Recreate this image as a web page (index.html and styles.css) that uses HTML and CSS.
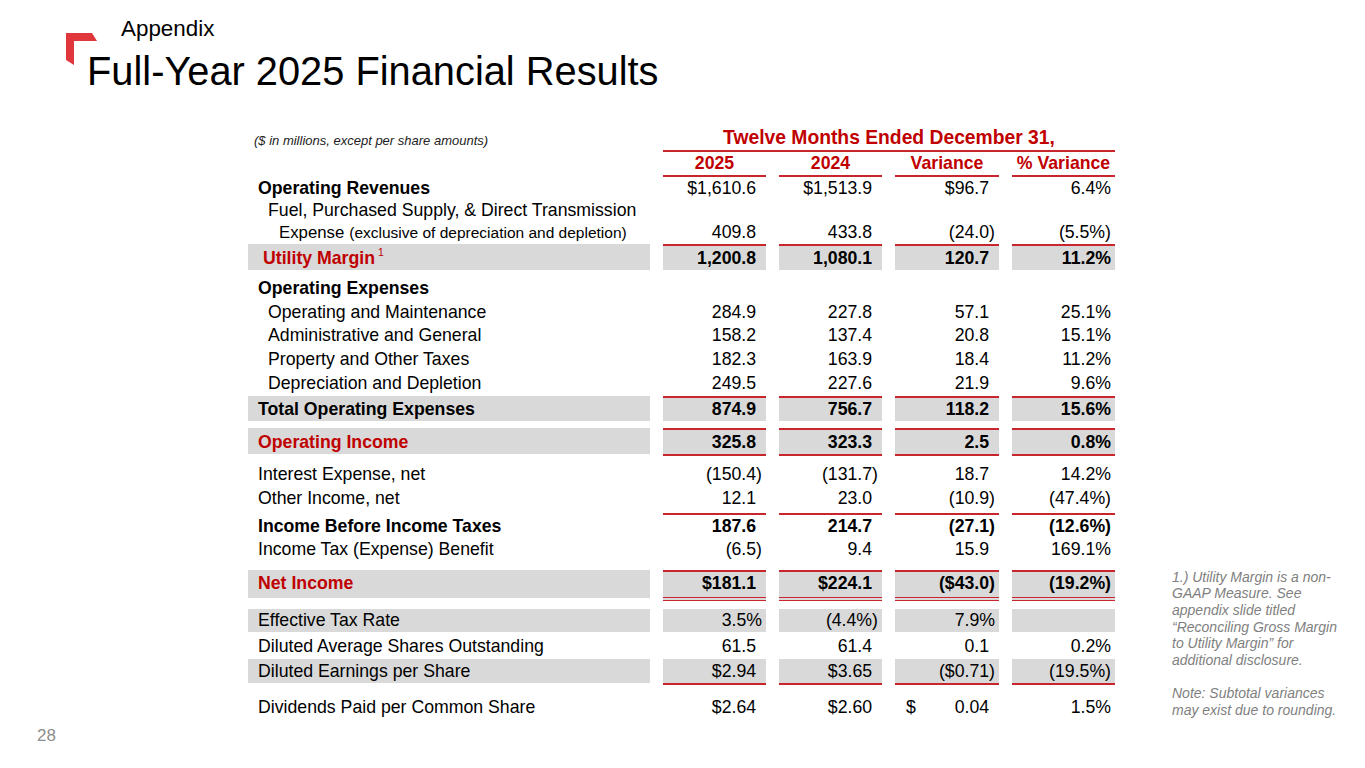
FILE: index.html
```html
<!DOCTYPE html>
<html lang="en">
<head>
<meta charset="utf-8">
<title>Full-Year 2025 Financial Results</title>
<link rel="stylesheet" href="styles.css">
</head>
<body>
<div class="slide">
  <svg class="logo" viewBox="0 0 32 33" aria-hidden="true">
    <polygon points="0,0 26,0 31,8 8,8 8,32 0,27" fill="#e0363c"/>
  </svg>
  <header class="head">
    <div class="kicker">Appendix</div>
    <h1 class="title">Full-Year 2025 Financial Results</h1>
  </header>

  <main class="main">
    <div class="fin">
      <div class="row hdr1">
        <div class="note">($ in millions, except per share amounts)</div>
        <div class="span">Twelve Months Ended December 31,</div>
      </div>
      <div class="row hdr2">
        <div></div>
        <div class="ch">2025</div>
        <div class="ch">2024</div>
        <div class="ch">Variance</div>
        <div class="ch">% Variance</div>
      </div>

      <div class="row r22">
        <div class="lab b">Operating Revenues</div>
        <div class="c p">$1,610.6</div>
        <div class="c p">$1,513.9</div>
        <div class="c p">$96.7</div>
        <div class="c">6.4%</div>
      </div>
      <div class="row r22">
        <div class="lab ind1">Fuel, Purchased Supply, &amp; Direct Transmission</div>
        <div></div><div></div><div></div><div></div>
      </div>
      <div class="row r22">
        <div class="lab ind2"><span class="exp">Expense</span> <span class="small">(exclusive of depreciation and depletion)</span></div>
        <div class="c p">409.8</div>
        <div class="c p">433.8</div>
        <div class="c">(24.0)</div>
        <div class="c">(5.5%)</div>
      </div>

      <div class="row g bt b">
        <div class="lab red ind0">Utility Margin<span class="sup">1</span></div>
        <div class="c p">1,200.8</div>
        <div class="c p">1,080.1</div>
        <div class="c p">120.7</div>
        <div class="c">11.2%</div>
      </div>

      <div class="row r237 mt7">
        <div class="lab b">Operating Expenses</div>
        <div></div><div></div><div></div><div></div>
      </div>
      <div class="row r237">
        <div class="lab ind1">Operating and Maintenance</div>
        <div class="c p">284.9</div>
        <div class="c p">227.8</div>
        <div class="c p">57.1</div>
        <div class="c">25.1%</div>
      </div>
      <div class="row r237">
        <div class="lab ind1">Administrative and General</div>
        <div class="c p">158.2</div>
        <div class="c p">137.4</div>
        <div class="c p">20.8</div>
        <div class="c">15.1%</div>
      </div>
      <div class="row r237">
        <div class="lab ind1">Property and Other Taxes</div>
        <div class="c p">182.3</div>
        <div class="c p">163.9</div>
        <div class="c p">18.4</div>
        <div class="c">11.2%</div>
      </div>
      <div class="row r237">
        <div class="lab ind1">Depreciation and Depletion</div>
        <div class="c p">249.5</div>
        <div class="c p">227.6</div>
        <div class="c p">21.9</div>
        <div class="c">9.6%</div>
      </div>

      <div class="row g bt b tot">
        <div class="lab">Total Operating Expenses</div>
        <div class="c p">874.9</div>
        <div class="c p">756.7</div>
        <div class="c p">118.2</div>
        <div class="c">15.6%</div>
      </div>

      <div class="row g bt bb b mt7">
        <div class="lab red">Operating Income</div>
        <div class="c p">325.8</div>
        <div class="c p">323.3</div>
        <div class="c p">2.5</div>
        <div class="c">0.8%</div>
      </div>

      <div class="row mt6">
        <div class="lab">Interest Expense, net</div>
        <div class="c">(150.4)</div>
        <div class="c">(131.7)</div>
        <div class="c p">18.7</div>
        <div class="c">14.2%</div>
      </div>
      <div class="row">
        <div class="lab">Other Income, net</div>
        <div class="c p">12.1</div>
        <div class="c p">23.0</div>
        <div class="c">(10.9)</div>
        <div class="c">(47.4%)</div>
      </div>

      <div class="row bt b r22 mt3">
        <div class="lab">Income Before Income Taxes</div>
        <div class="c p">187.6</div>
        <div class="c p">214.7</div>
        <div class="c">(27.1)</div>
        <div class="c">(12.6%)</div>
      </div>
      <div class="row">
        <div class="lab">Income Tax (Expense) Benefit</div>
        <div class="c">(6.5)</div>
        <div class="c p">9.4</div>
        <div class="c p">15.9</div>
        <div class="c">169.1%</div>
      </div>

      <div class="row g bt bd b net">
        <div class="lab red">Net Income</div>
        <div class="c p">$181.1</div>
        <div class="c p">$224.1</div>
        <div class="c">($43.0)</div>
        <div class="c">(19.2%)</div>
      </div>

      <div class="row g etr">
        <div class="lab">Effective Tax Rate</div>
        <div class="c">3.5%</div>
        <div class="c">(4.4%)</div>
        <div class="c">7.9%</div>
        <div class="c"></div>
      </div>
      <div class="row mt2">
        <div class="lab">Diluted Average Shares Outstanding</div>
        <div class="c p">61.5</div>
        <div class="c p">61.4</div>
        <div class="c p">0.1</div>
        <div class="c">0.2%</div>
      </div>
      <div class="row g bb mt1">
        <div class="lab">Diluted Earnings per Share</div>
        <div class="c p">$2.94</div>
        <div class="c p">$3.65</div>
        <div class="c">($0.71)</div>
        <div class="c">(19.5%)</div>
      </div>

      <div class="row div">
        <div class="lab">Dividends Paid per Common Share</div>
        <div class="c p">$2.64</div>
        <div class="c p">$2.60</div>
        <div class="c p split"><span>$</span><span>0.04</span></div>
        <div class="c">1.5%</div>
      </div>
    </div>

    <aside class="foot">
      1.) Utility Margin is a non-<br>
      GAAP Measure. See<br>
      appendix slide titled<br>
      “Reconciling Gross Margin<br>
      to Utility Margin” for<br>
      additional disclosure.<br>
      <br>
      Note: Subtotal variances<br>
      may exist due to rounding.
    </aside>
  </main>

  <div class="pg">28</div>
</div>
</body>
</html>
```

FILE: styles.css
```css
:root {
  --red: #c00000;
  --line: #c8262c;
  --gray: #d9d9d9;
}

* { box-sizing: border-box; }

body {
  margin: 0;
  background: #fff;
  color: #000;
  font-family: "Liberation Sans", Arial, sans-serif;
}

.slide {
  position: relative;
  width: 1365px;
  height: 768px;
  overflow: hidden;
  display: flex;
  flex-direction: column;
}

.logo {
  position: absolute;
  left: 66px;
  top: 33px;
  width: 32px;
  height: 33px;
}

.head {
  padding: 16px 0 0 87px;
}

.kicker {
  margin-left: 34px;
  font-size: 22.4px;
  line-height: 26px;
}

.title {
  margin: 7.3px 0 0;
  font-size: 39.8px;
  font-weight: normal;
  line-height: 44px;
  white-space: nowrap;
}

.main {
  display: flex;
  align-items: flex-end;
  margin-top: 35px;
  padding-left: 248px;
}

.fin {
  width: 867px;
}

.row {
  display: grid;
  grid-template-columns: 402px 103px 103px 104px 103px;
  column-gap: 13px;
  font-size: 17.7px;
  line-height: 24px;
}

.lab {
  padding-left: 10px;
  white-space: nowrap;
}

.ind0 { padding-left: 15px; }
.ind1 { padding-left: 20px; }
.ind2 { padding-left: 31px; }

.exp { font-size: 16.8px; }
.small { font-size: 15.5px; }

.c {
  text-align: right;
  padding-right: 4px;
  white-space: nowrap;
}

.c.p { padding-right: calc(4px + 0.333em); }

.split {
  display: flex;
  justify-content: space-between;
  padding-left: 11px;
}

.b { font-weight: bold; }
.red { color: var(--red); }

.sup {
  font-size: 10.5px;
  font-weight: normal;
  line-height: 0;
  vertical-align: 8px;
  margin-left: 3px;
}

/* header rows */
.hdr1 { line-height: 20px; }

.note {
  align-self: start;
  padding: 3px 0 0 6px;
  font-size: 13px;
  font-style: italic;
  line-height: 20px;
  color: #222;
  white-space: nowrap;
}

.span {
  grid-column: 2 / 6;
  text-align: center;
  font-size: 19.3px;
  font-weight: bold;
  color: var(--red);
  padding-bottom: 2px;
  border-bottom: 2px solid var(--line);
  white-space: nowrap;
}

.hdr2 { line-height: 22.7px; }

.ch {
  text-align: center;
  font-weight: bold;
  color: var(--red);
  border-bottom: 2px solid var(--line);
  white-space: nowrap;
}

/* row heights and spacing */
.r22 { line-height: 22px; }
.r237 { line-height: 23.7px; }
.tot { line-height: 23.5px; }
.etr { line-height: 23.3px; margin-top: 7.7px; }
.div { margin-top: 9.6px; }

.mt1 { margin-top: 1px; }
.mt2 { margin-top: 2px; }
.mt3 { margin-top: 3px; }
.mt6 { margin-top: 6px; }
.mt7 { margin-top: 7px; }

/* gray shaded rows */
.g > div { background: var(--gray); }

/* rules on numeric cells */
.bt > .c { border-top: 2px solid var(--line); }
.bt > .lab { padding-top: 2px; }

.bb > .c { border-bottom: 2px solid var(--line); }
.bb > .lab { margin-bottom: 2px; }

.net { line-height: 23px; margin-top: 9px; }
.net > .c, .net > .lab { padding-bottom: 2px; }
.bd > .c { border-bottom: 4px double var(--line); }
.bd > .lab { margin-bottom: 3px; }

/* footnote */
.foot {
  margin-left: 57px;
  font-size: 14px;
  font-style: italic;
  line-height: 16.67px;
  color: #7f7f7f;
  white-space: nowrap;
}

.pg {
  margin: 7.5px 0 0 37px;
  font-size: 17px;
  line-height: 20px;
  color: #8c8c8c;
}
```
